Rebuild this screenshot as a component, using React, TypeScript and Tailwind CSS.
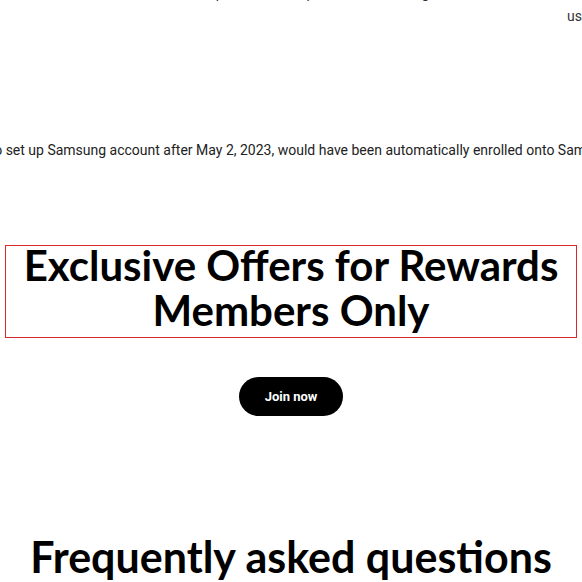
import React from 'react';

const App: React.FC = () => {
  return (
    <div className="w-full min-h-screen bg-white overflow-hidden text-black">
      {/* cut-off lines from the section above */}
      <div className="h-[40px] relative overflow-hidden font-['Roboto',sans-serif] text-[14px] leading-[20px] text-[#333]">
        <div className="flex justify-center whitespace-nowrap -mt-[17px]">
          <p>
            Members who reached the tier before the end of the period can keep benefits while eligible, from the time that Samsung renews it
          </p>
        </div>
        <p className="whitespace-nowrap pl-[567px] mt-[3px]">usage</p>
      </div>

      {/* enrolment note */}
      <div className="flex justify-center whitespace-nowrap mt-[100px] font-['Roboto',sans-serif] text-[14px] leading-[20px] text-[#222]">
        <p>
          Customers who set up Samsung account after May 2, 2023, would have been automatically enrolled onto Samsung Rewards.
        </p>
      </div>

      {/* offers heading */}
      <div className="mt-[85px] mx-[5px] border border-[#d92828] h-[93px] pb-[8px] flex items-center justify-center">
        <h2 className="text-center whitespace-nowrap font-['Lato',sans-serif] font-bold text-[42px] leading-[45px]">
          Exclusive Offers for Rewards
          <br />
          Members Only
        </h2>
      </div>

      <div className="flex justify-center mt-[39px]">
        <a
          href="#"
          className="w-[104px] h-[39px] rounded-full bg-black text-white flex items-center justify-center font-['Roboto',sans-serif] font-bold text-[13px]"
        >
          Join now
        </a>
      </div>

      {/* FAQ */}
      <h2 className="mt-[118px] text-center font-['Lato',sans-serif] font-bold text-[43px] leading-[45px] whitespace-nowrap">
        Frequently asked questions
      </h2>
    </div>
  );
};

export default App;
